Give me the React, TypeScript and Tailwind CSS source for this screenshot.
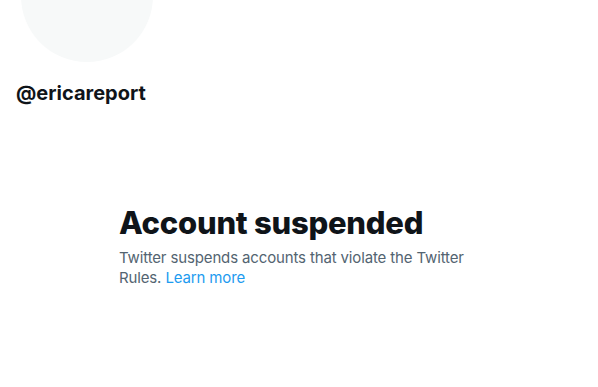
import React from 'react';

export default function App() {
  return (
    <div className="min-h-[387px] w-full bg-white font-['Inter','Liberation_Sans',sans-serif] text-[#0f1419]">
      <div className="px-4">
        <div className="ml-[5px] -mt-[70px] h-[132px] w-[132px] rounded-full bg-[#f7f9f9]" />
        <div className="mt-[19px] text-[20px] font-bold leading-6">@ericareport</div>
      </div>
      <div className="mx-auto mt-[100px] w-[360px]">
        <h1 className="text-[31px] font-extrabold leading-9 tracking-[-0.25px]">Account suspended</h1>
        <p className="mt-[7px] text-[15px] leading-5 tracking-[-0.14px] text-[#536471]">
          Twitter suspends accounts that violate the Twitter Rules.{' '}
          <a href="#" className="text-[#1d9bf0]">Learn more</a>
        </p>
      </div>
    </div>
  );
}
